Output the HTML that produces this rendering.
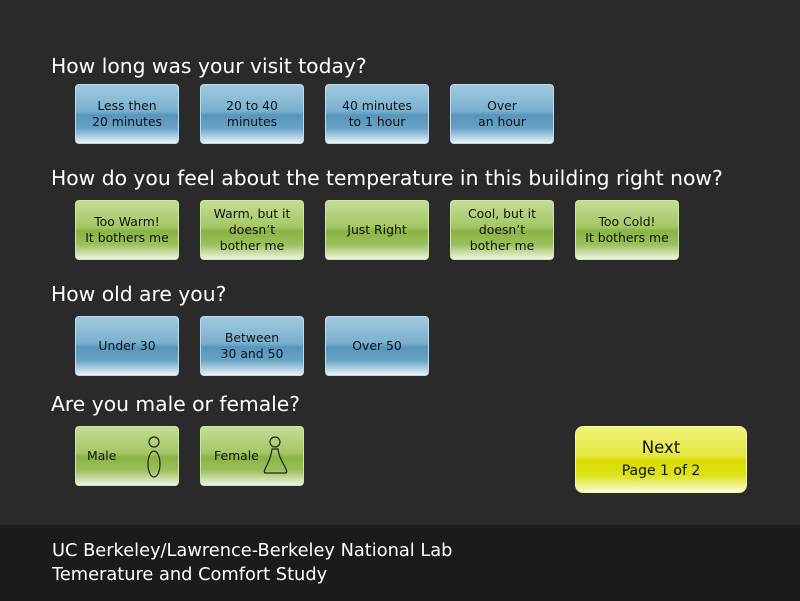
<!DOCTYPE html>
<html><head><style>
body{margin:0;width:800px;height:601px;background:#2a2a2a;font-family:"DejaVu Sans","Liberation Sans",sans-serif;position:relative;overflow:hidden}
h2{position:absolute;left:51px;margin:0;color:#fff;font-weight:normal;font-size:20.3px;font-family:"DejaVu Sans",sans-serif}
.b{position:absolute;width:104px;height:60px;border-radius:4px;box-sizing:border-box;display:flex;align-items:center;justify-content:center;text-align:center;font-size:12.4px;line-height:16px;color:#111}
.bl{background:linear-gradient(#a0c9df 0%,#7ab0cf 45%,#5895bb 52%,#68a3c6 75%,#e9f3f8 100%);border:1px solid #bcdcec}
.gr{background:linear-gradient(#c4dc94 0%,#a4c766 45%,#8ab244 52%,#9cc05c 75%,#eef5e0 100%);border:1px solid #cfe4a8}
.nx{background:linear-gradient(#f0f27a 0%,#e4e640 45%,#d8dc00 52%,#dde21c 75%,#fafce0 100%);border:1px solid #f3f5a0;width:172px;height:67px;border-radius:8px;font-size:16.5px;line-height:22px}
.ft{position:absolute;left:0;top:525px;width:800px;height:76px;background:#1b1b1b;color:#fff;font-size:17.8px;line-height:24px;padding:14px 0 0 52px;box-sizing:border-box}
</style></head><body>
<h2 style="top:54px">How long was your visit today?</h2>
<div class="b bl" style="left:75px;top:84px">Less then<br>20 minutes</div>
<div class="b bl" style="left:200px;top:84px">20 to 40<br>minutes</div>
<div class="b bl" style="left:325px;top:84px">40 minutes<br>to 1 hour</div>
<div class="b bl" style="left:450px;top:84px">Over<br>an hour</div>
<h2 style="top:166px">How do you feel about the temperature in this building right now?</h2>
<div class="b gr" style="left:75px;top:200px">Too Warm!<br>It bothers me</div>
<div class="b gr" style="left:200px;top:200px">Warm, but it<br>doesn’t<br>bother me</div>
<div class="b gr" style="left:325px;top:200px">Just Right</div>
<div class="b gr" style="left:450px;top:200px">Cool, but it<br>doesn’t<br>bother me</div>
<div class="b gr" style="left:575px;top:200px">Too Cold!<br>It bothers me</div>
<h2 style="top:282px">How old are you?</h2>
<div class="b bl" style="left:75px;top:316px">Under 30</div>
<div class="b bl" style="left:200px;top:316px">Between<br>30 and 50</div>
<div class="b bl" style="left:325px;top:316px">Over 50</div>
<h2 style="top:392px">Are you male or female?</h2>
<div class="b gr" style="left:75px;top:426px;justify-content:flex-start;padding-left:11px">Male
<svg style="position:absolute;left:68px;top:8px" width="20" height="46"><circle cx="10" cy="7" r="5" fill="none" stroke="#222" stroke-width="1.2"/><ellipse cx="10" cy="29" rx="6" ry="13" fill="none" stroke="#222" stroke-width="1.2"/></svg></div>
<div class="b gr" style="left:200px;top:426px;justify-content:flex-start;padding-left:13px">Female
<svg style="position:absolute;left:60px;top:8px" width="30" height="46"><circle cx="14" cy="7" r="5" fill="none" stroke="#222" stroke-width="1.2"/><path d="M11 14 Q10 22 6 30 Q2 37 4 38 L25 38 Q27 37 23 30 Q18 22 17 14 Z" fill="none" stroke="#222" stroke-width="1.2"/></svg></div>
<div class="b nx" style="left:575px;top:426px"><div>Next<br><span style="font-size:14px">Page 1 of 2</span></div></div>
<div class="ft">UC Berkeley/Lawrence-Berkeley National Lab<br>Temerature and Comfort Study</div>
</body></html>
